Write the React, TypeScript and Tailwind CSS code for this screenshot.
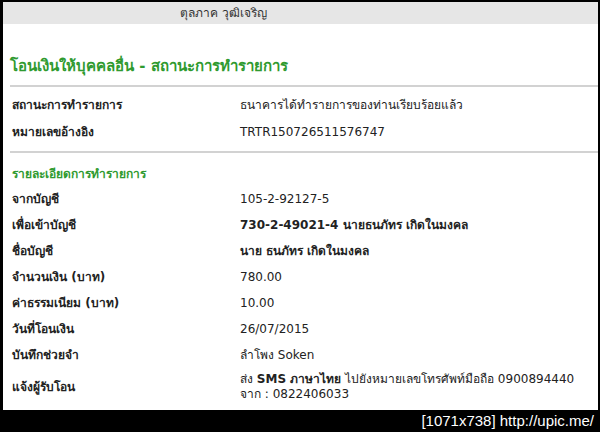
export default function App() {
  const rows: { label: string; value: React.ReactNode }[] = [
    { label: "จากบัญชี", value: "105-2-92127-5" },
    {
      label: "เพื่อเข้าบัญชี",
      value: <span className="font-bold">730-2-49021-4 นายธนภัทร เกิดในมงคล</span>,
    },
    { label: "ชื่อบัญชี", value: <span className="font-bold">นาย ธนภัทร เกิดในมงคล</span> },
    { label: "จำนวนเงิน (บาท)", value: "780.00" },
    { label: "ค่าธรรมเนียม (บาท)", value: "10.00" },
    { label: "วันที่โอนเงิน", value: "26/07/2015" },
    { label: "บันทึกช่วยจำ", value: "ลำโพง Soken" },
  ];
  return (
    <div
      className="w-[600px] h-[432px] bg-black flex flex-col text-[12px] text-[#222]"
      style={{ fontFamily: '"DejaVu Sans", "Noto Sans", sans-serif' }}
    >
      <div className="mt-[2px] ml-[3px] mr-[2px] h-[409px] bg-white flex flex-col">
        <div className="h-[22px] bg-[#e6e6e6] flex items-center pl-[177px] text-[#333] text-[12px]">
          ตุลภาค วุฒิเจริญ
        </div>
        <div className="pl-[7px] pt-[29px] text-[#2f9a2f] font-bold text-[15px] leading-[26px]">
          โอนเงินให้บุคคลอื่น - สถานะการทำรายการ
        </div>
        <div className="ml-[7px] mt-[6px] h-[2px] bg-[#d2d2d2]" />
        <div className="grid grid-cols-[228px_1fr] pl-[9px] pt-[5px]">
          <div className="font-bold h-[27px] leading-[27px]">สถานะการทำรายการ</div>
          <div className="h-[27px] leading-[27px]">ธนาคารได้ทำรายการของท่านเรียบร้อยแล้ว</div>
          <div className="font-bold h-[27px] leading-[27px]">หมายเลขอ้างอิง</div>
          <div className="h-[27px] leading-[27px]">TRTR150726511576747</div>
        </div>
        <div className="ml-[7px] mt-[5px] h-[2px] bg-[#d2d2d2]" />
        <div className="pl-[9px] pt-[9px] h-[33px] leading-[24px] text-[#2f9a2f] font-bold">
          รายละเอียดการทำรายการ
        </div>
        <div className="grid grid-cols-[228px_1fr] pl-[9px]">
          {rows.map((r) => (
            <div key={r.label} className="contents">
              <div className="font-bold h-[26px] leading-[26px]">{r.label}</div>
              <div className="h-[26px] leading-[26px]">{r.value}</div>
            </div>
          ))}
          <div className="font-bold h-[38px] flex items-center">แจ้งผู้รับโอน</div>
          <div className="h-[38px] flex flex-col justify-center leading-[15px]">
            <div>
              ส่ง <span className="font-bold">SMS ภาษาไทย</span> ไปยังหมายเลขโทรศัพท์มือถือ 0900894440
            </div>
            <div>จาก : 0822406033</div>
          </div>
        </div>
      </div>
      <div className="flex-1 flex items-center justify-end pr-[6px] text-white text-[15px]" style={{ fontFamily: '"Liberation Sans", sans-serif' }}>
        [1071x738] http://upic.me/
      </div>
    </div>
  );
}
